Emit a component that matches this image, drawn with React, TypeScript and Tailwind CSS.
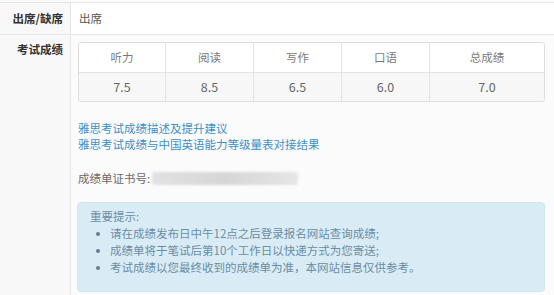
import React from "react";

const font = { fontFamily: '"Noto Sans CJK SC", "Noto Sans", sans-serif' };

export default function App() {
  const heads = ["听力", "阅读", "写作", "口语", "总成绩"];
  const vals = ["7.5", "8.5", "6.5", "6.0", "7.0"];
  const widths = ["w-[87px]", "w-[88px]", "w-[88px]", "w-[88px]", "flex-1"];
  return (
    <div className="w-[554px] h-[295px] bg-white overflow-hidden" style={font}>
      <div className="h-[2px] bg-[#fafafa]" />
      <div className="flex border-t border-[#e6e6e6] h-[32px]">
        <div className="w-[71px] bg-[#f8f8f8] border-r border-[#e6e6e6] flex items-center justify-end pr-[7px] text-[11.5px] font-bold text-[#333]">
          出席/缺席
        </div>
        <div className="flex-1 bg-white flex items-center pl-[8px] text-[11.5px] text-[#555]">出席</div>
      </div>
      <div className="flex border-t border-[#e6e6e6] h-[270px]">
        <div className="w-[71px] bg-[#f8f8f8] border-r border-[#e6e6e6] flex justify-end pr-[7px] pt-[6px] text-[11.5px] font-bold text-[#333] leading-[16px]">
          考试成绩
        </div>
        <div className="flex-1 bg-[#fbfbfb] pl-[7px] pr-[9px] pt-[7px]">
          <div className="border border-[#dedede] rounded-[3px] overflow-hidden">
            <div className="flex h-[30px] bg-white border-b border-[#e3e3e3]">
              {heads.map((h, i) => (
                <div
                  key={h}
                  className={`${widths[i]} ${i < 4 ? "border-r border-[#e3e3e3]" : ""} flex items-center justify-center text-[11.5px] text-[#7a7a7a]`}
                >
                  {h}
                </div>
              ))}
            </div>
            <div className="flex h-[28px] bg-[#f7f7f7]">
              {vals.map((v, i) => (
                <div
                  key={i}
                  className={`${widths[i]} ${i < 4 ? "border-r border-[#e3e3e3]" : ""} flex items-center justify-center text-[12.5px] text-[#666]`}
                >
                  {v}
                </div>
              ))}
            </div>
          </div>
          <div className="mt-[18px] text-[11.5px] leading-[16px] text-[#3d8fc6]">
            <div>雅思考试成绩描述及提升建议</div>
            <div>雅思考试成绩与中国英语能力等级量表对接结果</div>
          </div>
          <div className="mt-[18px] flex items-center text-[11.5px] leading-[16px] text-[#6a6a6a]">
            <span>成绩单证书号:</span>
            <div className="ml-[2px] w-[146px] h-[13px] rounded-[3px] bg-gradient-to-r from-[#e2e2e2] via-[#d6d6d6] to-[#e6e6e6] blur-[1px]" />
          </div>
          <div className="mt-[16px] -ml-[1px] bg-[#d9ecf6] border border-[#cfe6f1] rounded-[4px] pl-[12px] pt-[5px] pb-[15px] text-[11.5px] leading-[17px] text-[#6b8ca3]">
            <div>重要提示:</div>
            <ul className="pl-[6px]">
              {[
                "请在成绩发布日中午12点之后登录报名网站查询成绩;",
                "成绩单将于笔试后第10个工作日以快递方式为您寄送;",
                "考试成绩以您最终收到的成绩单为准，本网站信息仅供参考。",
              ].map((t) => (
                <li key={t} className="flex items-center">
                  <span className="w-[4px] h-[4px] rounded-full bg-[#5f7f96] mr-[10px] shrink-0" />
                  {t}
                </li>
              ))}
            </ul>
          </div>
        </div>
      </div>
    </div>
  );
}
